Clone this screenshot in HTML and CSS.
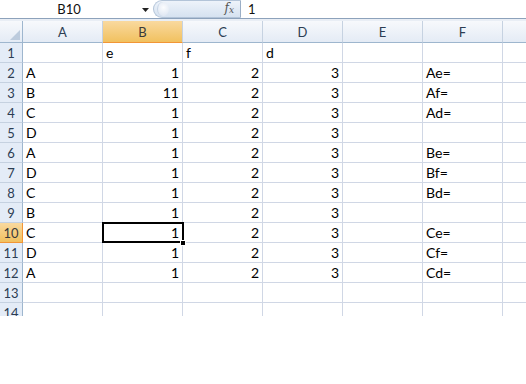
FILE: index.html
```html
<!DOCTYPE html>
<html>
<head>
<meta charset="utf-8">
<link rel="stylesheet" href="styles.css">
</head>
<body>
<div class="app">
  <div class="fbar">
    <div class="namebox">B10</div>
    <div class="nb-arrow"><svg width="7" height="5" viewBox="0 0 7 5"><path d="M0 1h7L3.5 5z" fill="#222"/></svg></div>
    <div class="pill">
      <span class="knob"></span>
      <span class="fx">f<sub>x</sub></span>
    </div>
    <div class="formula">1</div>
  </div>
  <div class="gap"></div>
  <div class="sheet">
    <div class="hd corner"><svg width="10" height="10" viewBox="0 0 10 10"><path d="M10 0V10H0z" fill="#bccbdd"/></svg></div>
    <div class="hd col">A</div><div class="hd col sel">B</div><div class="hd col">C</div><div class="hd col">D</div><div class="hd col">E</div><div class="hd col">F</div><div class="hd col last"></div>

    <div class="hd row">1</div><div class="c"></div><div class="c">e</div><div class="c">f</div><div class="c">d</div><div class="c"></div><div class="c"></div><div class="c last"></div>
    <div class="hd row">2</div><div class="c">A</div><div class="c n">1</div><div class="c n">2</div><div class="c n">3</div><div class="c"></div><div class="c">Ae=</div><div class="c last"></div>
    <div class="hd row">3</div><div class="c">B</div><div class="c n">11</div><div class="c n">2</div><div class="c n">3</div><div class="c"></div><div class="c">Af=</div><div class="c last"></div>
    <div class="hd row">4</div><div class="c">C</div><div class="c n">1</div><div class="c n">2</div><div class="c n">3</div><div class="c"></div><div class="c">Ad=</div><div class="c last"></div>
    <div class="hd row">5</div><div class="c">D</div><div class="c n">1</div><div class="c n">2</div><div class="c n">3</div><div class="c"></div><div class="c"></div><div class="c last"></div>
    <div class="hd row">6</div><div class="c">A</div><div class="c n">1</div><div class="c n">2</div><div class="c n">3</div><div class="c"></div><div class="c">Be=</div><div class="c last"></div>
    <div class="hd row">7</div><div class="c">D</div><div class="c n">1</div><div class="c n">2</div><div class="c n">3</div><div class="c"></div><div class="c">Bf=</div><div class="c last"></div>
    <div class="hd row">8</div><div class="c">C</div><div class="c n">1</div><div class="c n">2</div><div class="c n">3</div><div class="c"></div><div class="c">Bd=</div><div class="c last"></div>
    <div class="hd row">9</div><div class="c">B</div><div class="c n">1</div><div class="c n">2</div><div class="c n">3</div><div class="c"></div><div class="c"></div><div class="c last"></div>
    <div class="hd row sel">10</div><div class="c">C</div><div class="c n active">1<span class="handle"></span></div><div class="c n">2</div><div class="c n">3</div><div class="c"></div><div class="c">Ce=</div><div class="c last"></div>
    <div class="hd row">11</div><div class="c">D</div><div class="c n">1</div><div class="c n">2</div><div class="c n">3</div><div class="c"></div><div class="c">Cf=</div><div class="c last"></div>
    <div class="hd row">12</div><div class="c">A</div><div class="c n">1</div><div class="c n">2</div><div class="c n">3</div><div class="c"></div><div class="c">Cd=</div><div class="c last"></div>
    <div class="hd row">13</div><div class="c"></div><div class="c"></div><div class="c"></div><div class="c"></div><div class="c"></div><div class="c"></div><div class="c last"></div>
    <div class="hd row">14</div><div class="c"></div><div class="c"></div><div class="c"></div><div class="c"></div><div class="c"></div><div class="c"></div><div class="c last"></div>
  </div>
</div>
</body>
</html>
```
FILE: styles.css
```css
* { box-sizing: border-box; }
html, body { margin: 0; padding: 0; background: #fff; }
body { width: 526px; height: 384px; overflow: hidden; font-family: Lato, "Open Sans", sans-serif; }

.app { width: 526px; }

.fbar {
  height: 19px;
  display: flex;
  align-items: stretch;
  border-bottom: 1px solid #8da2bb;
  background: #fff;
}
.namebox {
  width: 138px;
  font-size: 13px;
  line-height: 18px;
  text-align: center;
  color: #111;
}
.nb-arrow {
  width: 15px;
  display: flex;
  align-items: center;
  justify-content: center;
}
.pill {
  width: 88px;
  margin: 0 0 1px 0;
  height: 18px;
  border: 1px solid #b3c4d8;
  border-right-color: #9aaec6;
  border-radius: 9px 0 0 9px;
  background: linear-gradient(#eef3fa, #d6e2f0);
  display: flex;
  align-items: center;
  justify-content: space-between;
  padding: 0 6px 0 3px;
}
.knob {
  width: 12px; height: 14px;
  border-radius: 50%;
  background: radial-gradient(circle at 50% 40%, #fbfcfe 0, #e3eaf4 70%);
  border-left: 1px solid #c7d4e4;
}
.fx {
  font-family: "DejaVu Serif", "Liberation Serif", serif;
  font-style: italic;
  font-size: 12px;
  color: #555;
  line-height: 12px;
}
.fx sub { font-size: 9px; vertical-align: -1px; }
.formula {
  padding-left: 7px;
  font-size: 13px;
  line-height: 18px;
  color: #111;
}

.gap { height: 2px; background: #e9eef5; }

.sheet {
  display: grid;
  grid-template-columns: 23px repeat(6, 80px) 24px;
  grid-template-rows: 22px repeat(14, 20px);
  height: 295px;
  overflow: hidden;
}

.hd {
  font-size: 13px;
  color: #2c3d53;
  display: flex;
  align-items: center;
  justify-content: center;
}
.col {
  background: linear-gradient(#f7f9fc, #e4ebf5);
  border-right: 1px solid #c6d2e1;
  border-bottom: 1px solid #9eb6ce;
}
.col.last { border-right: none; }
.corner {
  background: linear-gradient(#f7f9fc, #e4ebf5);
  border-right: 1px solid #9eb6ce;
  border-bottom: 1px solid #9eb6ce;
  align-items: flex-end;
  justify-content: flex-end;
  padding: 0 2px 2px 0;
}
.row {
  background: #e4ecf7;
  border-right: 1px solid #9eb6ce;
  border-bottom: 1px solid #c5d1e0;
  font-size: 13px;
}
.hd.sel {
  background: linear-gradient(#f9d99f, #f1c15f);
  border-bottom-color: #f29536;
  color: #3a3a3a;
}
.row.sel { border-right-color: #f29536; }

.c {
  border-right: 1px solid #d0d7e5;
  border-bottom: 1px solid #d0d7e5;
  font-size: 14px;
  color: #000;
  padding: 0 3px;
  line-height: 19px;
  white-space: nowrap;
  position: relative;
}
.c.last { border-right: none; }
.c.n { text-align: right; }

.active::after {
  content: "";
  position: absolute;
  left: -1px; top: -1px; right: -2px; bottom: -1px;
  border: 2px solid #000;
}
.handle {
  position: absolute;
  right: -4px;
  bottom: -4px;
  width: 6px;
  height: 6px;
  background: #000;
  border: 1px solid #fff;
  z-index: 2;
}
```
